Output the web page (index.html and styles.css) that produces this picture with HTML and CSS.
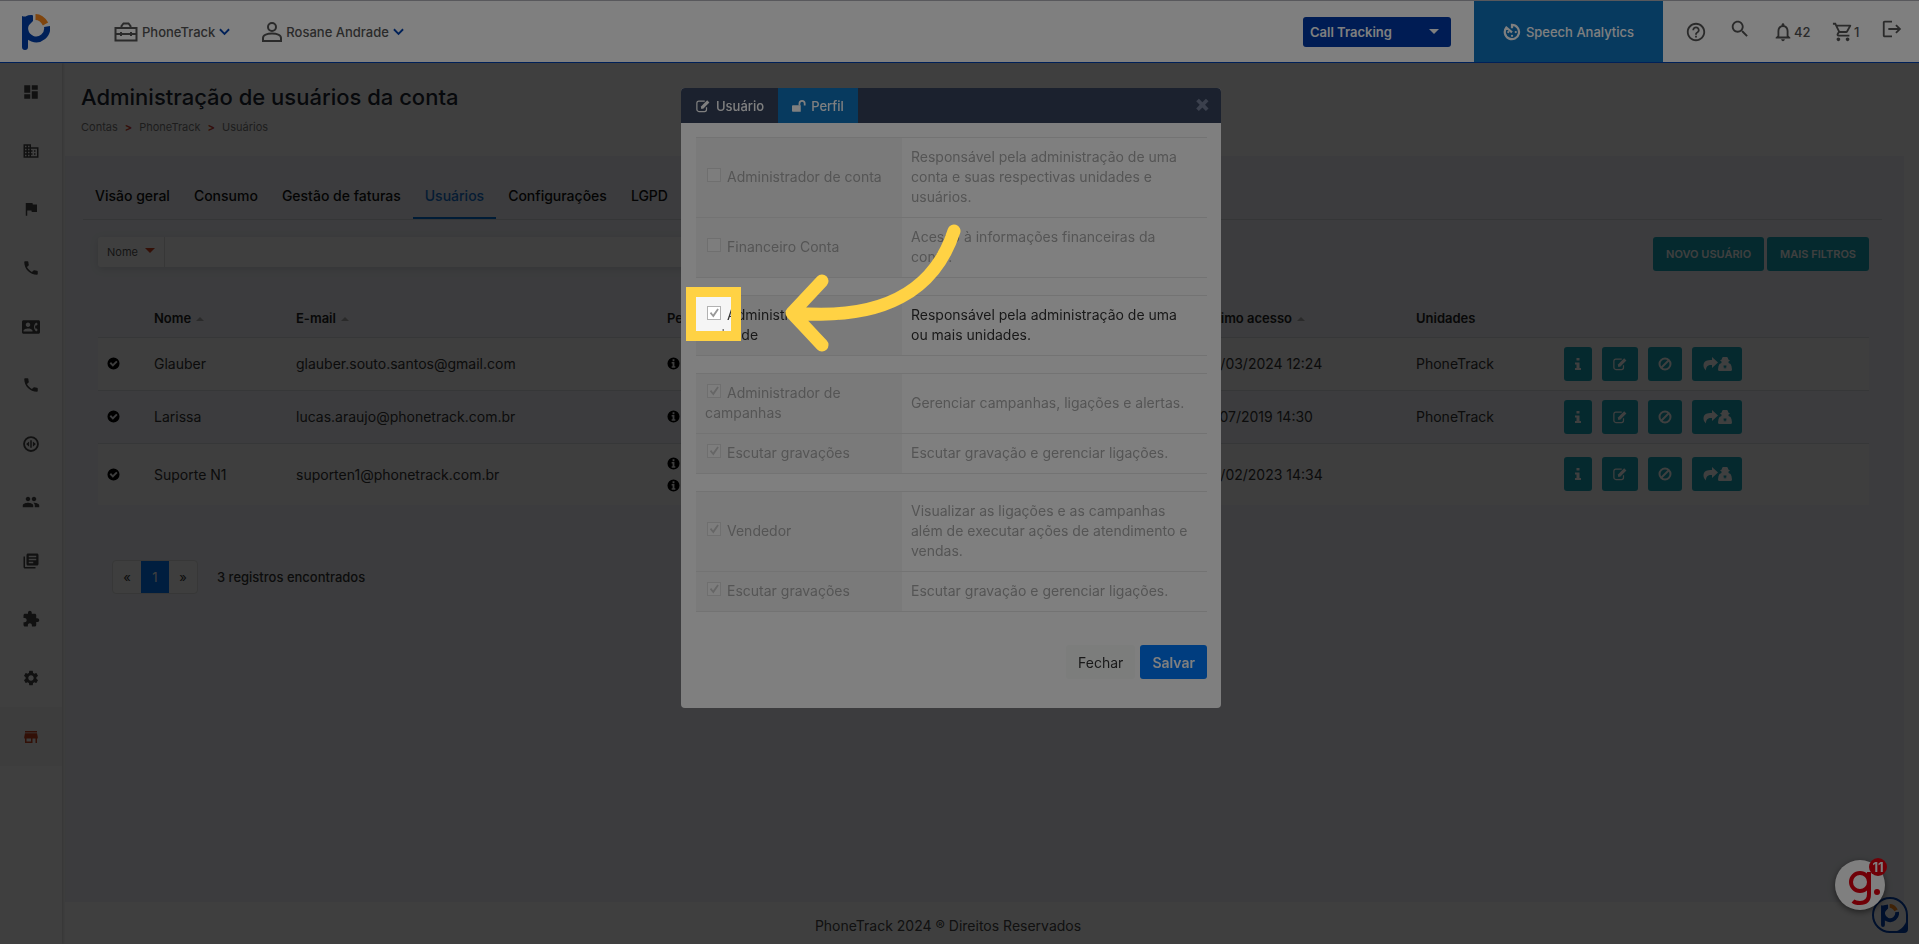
FILE: index.html
```html
<!DOCTYPE html>
<html lang="pt-BR">
<head>
    <meta charset="UTF-8">
    <meta name="viewport" content="width=device-width, initial-scale=1.0">
    <title>PhoneTrack</title>
    <link rel="stylesheet" href="styles.css">
</head>
<body>

    <svg class="sprite" aria-hidden="true">
        <symbol id="i-dashboard" viewBox="0 0 24 24"><path d="M3 13h8V3H3v10zm0 8h8v-6H3v6zm10 0h8V11h-8v10zm0-18v6h8V3h-8z"/></symbol>
        <symbol id="i-business" viewBox="0 0 24 24"><path d="M12 7V3H2v18h20V7H12zM6 19H4v-2h2v2zm0-4H4v-2h2v2zm0-4H4V9h2v2zm0-4H4V5h2v2zm4 12H8v-2h2v2zm0-4H8v-2h2v2zm0-4H8V9h2v2zm0-4H8V5h2v2zm10 12h-8v-2h2v-2h-2v-2h2v-2h-2V9h8v10zm-2-8h-2v2h2v-2zm0 4h-2v2h2v-2z"/></symbol>
        <symbol id="i-flag" viewBox="0 0 24 24"><path d="M14.4 6L14 4H5v17h2v-7h5.6l.4 2h7V6z"/></symbol>
        <symbol id="i-phone" viewBox="0 0 24 24"><path d="M6.62 10.79c1.44 2.83 3.76 5.14 6.59 6.59l2.2-2.2c.27-.27.67-.36 1.02-.24 1.12.37 2.33.57 3.57.57.55 0 1 .45 1 1V20c0 .55-.45 1-1 1-9.39 0-17-7.61-17-17 0-.55.45-1 1-1h3.5c.55 0 1 .45 1 1 0 1.25.2 2.45.57 3.57.11.35.03.74-.25 1.02l-2.2 2.2z"/></symbol>
        <symbol id="i-contact" viewBox="0 0 24 24"><path d="M22 3H2C.9 3 0 3.9 0 5v14c0 1.1.9 2 2 2h20c1.1 0 1.99-.9 1.99-2L24 5c0-1.1-.9-2-2-2zM8 6c1.66 0 3 1.34 3 3s-1.34 3-3 3-3-1.34-3-3 1.34-3 3-3zm6 12H2v-1c0-2 4-3.1 6-3.1s6 1.1 6 3.1v1zm3.85-4h1.64L21 16l-1.99 1.99c-1.31-.98-2.28-2.38-2.73-3.99-.18-.64-.28-1.31-.28-2s.1-1.36.28-2c.45-1.62 1.42-3.01 2.73-3.99L21 8l-1.51 2h-1.64c-.22.63-.35 1.3-.35 2s.13 1.37.35 2z"/></symbol>
        <symbol id="i-code" viewBox="0 0 24 24"><path d="M12 1.500a10.500 10.500 0 100 21 10.500 10.500 0 000-21zm0 2.500a8 8 0 110 16 8 8 0 010-16zM11 7h2v10h-2zM9.500 8.500v7L5.500 12zM14.500 8.500v7l4-3.500z"/></symbol>
        <symbol id="i-group" viewBox="0 0 24 24"><path d="M16 11c1.66 0 2.99-1.34 2.99-3S17.66 5 16 5c-1.66 0-3 1.34-3 3s1.34 3 3 3zm-8 0c1.66 0 2.99-1.34 2.99-3S9.66 5 8 5C6.34 5 5 6.34 5 8s1.34 3 3 3zm0 2c-2.33 0-7 1.17-7 3.5V19h14v-2.5c0-2.33-4.67-3.5-7-3.5zm8 0c-.29 0-.62.02-.97.05 1.16.84 1.97 1.97 1.97 3.45V19h6v-2.500c0-2.330-4.670-3.500-7-3.500z"/></symbol>
        <symbol id="i-books" viewBox="0 0 24 24"><path d="M4 6H2v14c0 1.1.9 2 2 2h14v-2H4V6zm16-4H8c-1.100 0-2 .9-2 2v12c0 1.100.9 2 2 2h12c1.100 0 2-.9 2-2V4c0-1.100-.9-2-2-2zm-1 9H9V9h10v2zm-4 4H9v-2h6v2zm4-8H9V5h10v2z"/></symbol>
        <symbol id="i-extension" viewBox="0 0 24 24"><path d="M20.5 11H19V7c0-1.100-.9-2-2-2h-4V3.500C13 2.120 11.880 1 10.500 1S8 2.120 8 3.500V5H4c-1.100 0-1.990.9-1.990 2v3.800H3.500c1.490 0 2.700 1.210 2.700 2.700s-1.210 2.700-2.700 2.700H2V20c0 1.100.9 2 2 2h3.800v-1.500c0-1.490 1.210-2.700 2.700-2.700 1.490 0 2.700 1.210 2.700 2.700V22H17c1.100 0 2-.9 2-2v-4h1.500c1.380 0 2.500-1.120 2.500-2.500S21.880 11 20.500 11z"/></symbol>
        <symbol id="i-settings" viewBox="0 0 24 24"><path d="M19.14 12.94c.04-.3.06-.61.06-.94 0-.32-.02-.64-.07-.94l2.03-1.58c.18-.14.23-.41.12-.61l-1.92-3.32c-.12-.22-.37-.29-.59-.22l-2.39.96c-.5-.38-1.03-.7-1.62-.94l-.36-2.54c-.04-.24-.24-.41-.48-.41h-3.84c-.24 0-.43.17-.47.41l-.36 2.54c-.59.24-1.13.57-1.62.94l-2.39-.96c-.22-.08-.47 0-.59.22L2.74 8.87c-.12.21-.08.47.12.61l2.03 1.58c-.05.3-.09.63-.09.94s.02.64.07.94l-2.03 1.58c-.18.14-.23.41-.12.61l1.92 3.32c.12.22.37.29.59.22l2.39-.96c.5.38 1.03.7 1.62.94l.36 2.54c.05.24.24.41.48.41h3.84c.24 0 .44-.17.47-.41l.36-2.54c.59-.24 1.13-.56 1.62-.94l2.39.96c.22.08.47 0 .59-.22l1.92-3.32c.12-.22.07-.47-.12-.61l-2.01-1.58zM12 15.6c-1.98 0-3.6-1.62-3.6-3.6s1.62-3.6 3.6-3.6 3.6 1.62 3.6 3.6-1.62 3.6-3.6 3.6z"/></symbol>
        <symbol id="i-store" viewBox="0 0 24 24"><path d="M20 4H4v2h16V4zm1 10v-2l-1-5H4l-1 5v2h1v6h10v-6h4v6h2v-6h1zm-9 4H6v-4h6v4z"/></symbol>
        <symbol id="i-help" viewBox="0 0 24 24"><path d="M11 18h2v-2h-2v2zm1-16C6.48 2 2 6.48 2 12s4.48 10 10 10 10-4.48 10-10S17.52 2 12 2zm0 18c-4.41 0-8-3.59-8-8s3.59-8 8-8 8 3.59 8 8-3.59 8-8 8zm0-14c-2.21 0-4 1.79-4 4h2c0-1.1.9-2 2-2s2 .9 2 2c0 2-3 1.750-3 5h2c0-2.250 3-2.500 3-5 0-2.210-1.790-4-4-4z"/></symbol>
        <symbol id="i-search" viewBox="0 0 24 24"><path d="M15.500 14h-.79l-.28-.27C15.410 12.590 16 11.110 16 9.500 16 5.910 13.090 3 9.500 3S3 5.910 3 9.500 5.910 16 9.500 16c1.610 0 3.090-.59 4.230-1.570l.27.28v.79l5 4.990L20.490 19l-4.990-5zm-6 0C7.010 14 5 11.990 5 9.500S7.010 5 9.500 5 14 7.010 14 9.500 11.990 14 9.500 14z"/></symbol>
        <symbol id="i-bell" viewBox="0 0 24 24"><path d="M12 22c1.100 0 2-.9 2-2h-4c0 1.100.9 2 2 2zm6-6v-5c0-3.070-1.630-5.640-4.500-6.320V4c0-.83-.67-1.500-1.500-1.500s-1.500.67-1.500 1.500v.68C7.640 5.360 6 7.920 6 11v5l-2 2v1h16v-1l-2-2zm-2 1H8v-6c0-2.480 1.510-4.500 4-4.500s4 2.020 4 4.500v6z"/></symbol>
        <symbol id="i-cart" viewBox="0 0 24 24"><path d="M15.550 13c.75 0 1.410-.41 1.750-1.030l3.580-6.490c.37-.66-.11-1.480-.87-1.480H5.210l-.94-2H1v2h2l3.600 7.590-1.350 2.440C4.520 15.370 5.480 17 7 17h12v-2H7l1.100-2h7.450zM6.160 6h12.150l-2.760 5H8.530L6.160 6zM7 18c-1.100 0-1.990.9-1.990 2S5.900 22 7 22s2-.9 2-2-.9-2-2-2zm10 0c-1.100 0-1.990.9-1.990 2s.89 2 1.990 2 2-.9 2-2-.9-2-2-2z"/></symbol>
        <symbol id="i-logout" viewBox="0 0 24 24"><path d="M17 7l-1.410 1.410L18.170 11H8v2h10.170l-2.580 2.580L17 17l5-5zM4 5h8V3H4c-1.100 0-2 .9-2 2v14c0 1.100.9 2 2 2h8v-2H4V5z"/></symbol>
        <symbol id="i-person" viewBox="0 0 20 20"><g fill="none" stroke="currentColor" stroke-width="2"><circle cx="10" cy="5" r="4"/><path d="M1 19v-3c0-6 18-6 18 0v3z"/></g></symbol>
        <symbol id="i-toolbox" viewBox="0 0 24 20"><g fill="none" stroke="currentColor" stroke-width="2"><path d="M1.500 6h21v12.500h-21zM7.500 6V4l2-2.500h5l2 2.500v2M2 12h20M7 10v4M17 10v4"/></g></symbol>
        <symbol id="i-chevron" viewBox="0 0 12 8"><path d="M1 1l5 5 5-5" fill="none" stroke="currentColor" stroke-width="2"/></symbol>
        <symbol id="i-timer" viewBox="0 0 24 24"><path d="M12 7V2.500a9.500 9.500 0 11-7.500 3.500l7.500 6.500" fill="none" stroke="currentColor" stroke-width="3"/><circle cx="17" cy="12" r="1.500"/><circle cx="12" cy="17" r="1.500"/><circle cx="7" cy="12" r="1.500"/></symbol>
        <symbol id="i-edit" viewBox="0 0 16 16"><path d="M12 9.500V12a2.300 2.300 0 01-2.300 2.300H3.300A2.300 2.300 0 011 12V4.800a2.300 2.300 0 012.300-2.300H10" fill="none" stroke="currentColor" stroke-width="1.400"/><path d="M12.800 1.500l2.500 2.500-7.100 7.100H5.700V8.600z"/></symbol>
        <symbol id="i-unlock" viewBox="0 0 16 14"><path d="M1 6h9v7.500H1q-1 0-1-1V7q0-1 1-1z"/><path d="M8.500 6.500V4a3 3 0 016 0v2.500" fill="none" stroke="currentColor" stroke-width="2"/></symbol>
        <symbol id="i-check" viewBox="0 0 14 14"><path fill-rule="evenodd" d="M7 .5a6.500 6.500 0 100 13 6.500 6.500 0 000-13zM2.800 7l1.500-1.500 2 2L9.900 4l1.500 1.500-5.100 5z"/></symbol>
        <symbol id="i-info" viewBox="0 0 14 14"><path fill-rule="evenodd" d="M7 .5a6.500 6.500 0 100 13 6.500 6.500 0 000-13zM6 2.500h2v2H6zM5 5.500h3v4.500h1v1.500H5V10h1V7H5z"/></symbol>
        <symbol id="i-letter" viewBox="0 0 8 14"><path d="M2.500 1h3v2.500h-3zM1 5.500h4.500V11H7v2H1v-2h1.500V7.500H1z"/></symbol>
        <symbol id="i-ban" viewBox="0 0 14 14"><g fill="none" stroke="currentColor" stroke-width="2"><circle cx="7" cy="7" r="5.500"/><path d="M11 3l-8 8"/></g></symbol>
        <symbol id="i-share" viewBox="0 0 16 14"><path d="M10 0l6 5.500L10 11V8C6 7.800 4 9 4 13.500 2.500 12 1.500 10.500 1.500 8.500 1.500 4 5 3 10 3z"/></symbol>
        <symbol id="i-secret" viewBox="0 0 14 14"><path fill-rule="evenodd" d="M5 0h4q1 0 1.300 2.500L12 3.500l-1.500 1v1.500L12.500 7q1.500 2 1.500 5.500 0 1.500-1.500 1.500h-11Q0 14 0 12.500 0 9 1.500 7l2-1V4.500L2 3.500l1.700-1Q4 0 5 0zM5.500 8.500l.5 3.500 1-2 1 2 .5-3.500z"/></symbol>
        <symbol id="i-logo" viewBox="0 0 28 36">
            <path d="M0 2q3 1 4.500 0T9 1q2-.5 2 1v5L6 12v21a3 3 0 01-6 0z" fill="#0041b0"/>
            <path d="M25 12.500A11 11 0 117 6" fill="none" stroke="#0041b0" stroke-width="6"/>
            <path d="M13.500 3q6 0 10 7" fill="none" stroke="#ff8a1c" stroke-width="6"/>
        </symbol>
    </svg>

    <header class="topbar">
        <a class="logo" href="#" aria-label="PhoneTrack"><svg><use href="#i-logo"/></svg></a>
        <a class="top-menu" href="#"><svg class="icon-toolbox"><use href="#i-toolbox"/></svg>PhoneTrack<svg class="chevron"><use href="#i-chevron"/></svg></a>
        <a class="top-menu" href="#"><svg class="icon-person"><use href="#i-person"/></svg>Rosane Andrade<svg class="chevron"><use href="#i-chevron"/></svg></a>
        <button type="button" class="product">Call Tracking<span class="caret"></span></button>
        <a class="speech" href="#"><svg><use href="#i-timer"/></svg>Speech Analytics</a>
        <nav class="top-icons">
            <a href="#" aria-label="Ajuda"><svg><use href="#i-help"/></svg></a>
            <a class="raised" href="#" aria-label="Buscar"><svg><use href="#i-search"/></svg></a>
            <a href="#"><svg><use href="#i-bell"/></svg>42</a>
            <a href="#"><svg><use href="#i-cart"/></svg>1</a>
            <a class="raised" href="#" aria-label="Sair"><svg><use href="#i-logout"/></svg></a>
        </nav>
    </header>

    <div class="layout">
        <nav class="sidebar">
            <a href="#" aria-label="Dashboard"><svg><use href="#i-dashboard"/></svg></a>
            <a href="#" aria-label="Contas"><svg><use href="#i-business"/></svg></a>
            <a href="#" aria-label="Campanhas"><svg><use href="#i-flag"/></svg></a>
            <a href="#" aria-label="Números"><svg><use href="#i-phone"/></svg></a>
            <a href="#" aria-label="Contatos"><svg><use href="#i-contact"/></svg></a>
            <a href="#" aria-label="Ligações"><svg><use href="#i-phone"/></svg></a>
            <a href="#" aria-label="Scripts"><svg><use href="#i-code"/></svg></a>
            <a href="#" aria-label="Usuários"><svg><use href="#i-group"/></svg></a>
            <a href="#" aria-label="Relatórios"><svg><use href="#i-books"/></svg></a>
            <a href="#" aria-label="Integrações"><svg><use href="#i-extension"/></svg></a>
            <a href="#" aria-label="Configurações"><svg><use href="#i-settings"/></svg></a>
            <a class="active" href="#" aria-label="Loja"><svg><use href="#i-store"/></svg></a>
        </nav>

        <main class="page">
            <div class="page-title">
                <h1>Administração de usuários da conta</h1>
                <div class="breadcrumb"><a href="#">Contas</a><b>&gt;</b><a href="#">PhoneTrack</a><b>&gt;</b><a href="#">Usuários</a></div>
            </div>

            <div class="content">
                <nav class="tabs">
                    <a href="#">Visão geral</a>
                    <a href="#">Consumo</a>
                    <a href="#">Gestão de faturas</a>
                    <a class="active" href="#">Usuários</a>
                    <a href="#">Configurações</a>
                    <a href="#">LGPD</a>
                </nav>

                <div class="filters">
                    <div class="search">
                        <button type="button" class="search-field">Nome<span class="caret"></span></button>
                        <input type="text" aria-label="Buscar por nome">
                    </div>
                    <div class="filter-buttons">
                        <button type="button" class="btn-info">NOVO USUÁRIO</button>
                        <button type="button" class="btn-info">MAIS FILTROS</button>
                    </div>
                </div>

                <table class="users">
                    <thead>
                        <tr>
                            <th class="col-status"></th>
                            <th class="col-name">Nome<span class="sort"></span></th>
                            <th class="col-mail">E-mail<span class="sort"></span></th>
                            <th class="col-profile">Perfil</th>
                            <th class="col-access">Último acesso<span class="sort"></span></th>
                            <th class="col-unit">Unidades</th>
                            <th></th>
                        </tr>
                    </thead>
                    <tbody>
                        <tr>
                            <td><svg class="dot"><use href="#i-check"/></svg></td>
                            <td>Glauber</td>
                            <td>glauber.souto.santos@gmail.com</td>
                            <td class="profiles"><svg class="dot"><use href="#i-info"/></svg></td>
                            <td>05/03/2024 12:24</td>
                            <td>PhoneTrack</td>
                            <td>
                                <div class="actions">
                                    <button type="button" class="btn-info" aria-label="Detalhes"><svg class="w8"><use href="#i-letter"/></svg></button>
                                    <button type="button" class="btn-info" aria-label="Editar"><svg class="w16"><use href="#i-edit"/></svg></button>
                                    <button type="button" class="btn-info" aria-label="Desativar"><svg class="w14"><use href="#i-ban"/></svg></button>
                                    <button type="button" class="btn-info" aria-label="Acessar como"><svg class="w16"><use href="#i-share"/></svg><svg class="w14"><use href="#i-secret"/></svg></button>
                                </div>
                            </td>
                        </tr>
                        <tr>
                            <td><svg class="dot"><use href="#i-check"/></svg></td>
                            <td>Larissa</td>
                            <td>lucas.araujo@phonetrack.com.br</td>
                            <td class="profiles"><svg class="dot"><use href="#i-info"/></svg></td>
                            <td>11/07/2019 14:30</td>
                            <td>PhoneTrack</td>
                            <td>
                                <div class="actions">
                                    <button type="button" class="btn-info" aria-label="Detalhes"><svg class="w8"><use href="#i-letter"/></svg></button>
                                    <button type="button" class="btn-info" aria-label="Editar"><svg class="w16"><use href="#i-edit"/></svg></button>
                                    <button type="button" class="btn-info" aria-label="Desativar"><svg class="w14"><use href="#i-ban"/></svg></button>
                                    <button type="button" class="btn-info" aria-label="Acessar como"><svg class="w16"><use href="#i-share"/></svg><svg class="w14"><use href="#i-secret"/></svg></button>
                                </div>
                            </td>
                        </tr>
                        <tr class="tall">
                            <td><svg class="dot"><use href="#i-check"/></svg></td>
                            <td>Suporte N1</td>
                            <td>suporten1@phonetrack.com.br</td>
                            <td class="profiles"><svg class="dot"><use href="#i-info"/></svg><svg class="dot"><use href="#i-info"/></svg></td>
                            <td>02/02/2023 14:34</td>
                            <td></td>
                            <td>
                                <div class="actions">
                                    <button type="button" class="btn-info" aria-label="Detalhes"><svg class="w8"><use href="#i-letter"/></svg></button>
                                    <button type="button" class="btn-info" aria-label="Editar"><svg class="w16"><use href="#i-edit"/></svg></button>
                                    <button type="button" class="btn-info" aria-label="Desativar"><svg class="w14"><use href="#i-ban"/></svg></button>
                                    <button type="button" class="btn-info" aria-label="Acessar como"><svg class="w16"><use href="#i-share"/></svg><svg class="w14"><use href="#i-secret"/></svg></button>
                                </div>
                            </td>
                        </tr>
                    </tbody>
                </table>

                <div class="paging">
                    <div class="pages"><a href="#">«</a><a class="active" href="#">1</a><a href="#">»</a></div>
                    <span>3 registros encontrados</span>
                </div>
            </div>

            <footer>PhoneTrack 2024 ® Direitos Reservados</footer>
        </main>
    </div>

    <a class="assistant" href="#" aria-label="PhoneTrack"><svg><use href="#i-logo"/></svg></a>

    <div class="backdrop"></div>

    <button type="button" class="guide" aria-label="Guia">
        <svg viewBox="0 0 34 36"><g fill="none" stroke="#e1000f" stroke-width="4"><circle cx="13" cy="13" r="9"/><path d="M22 3v22q0 9-9 9-5 0-7-2"/></g><circle cx="30" cy="23" r="3" fill="#e1000f"/></svg>
        <span>11</span>
    </button>

    <div class="modal" role="dialog">
        <div class="modal-header">
            <a href="#"><svg class="w16"><use href="#i-edit"/></svg>Usuário</a>
            <a class="active" href="#"><svg class="w14"><use href="#i-unlock"/></svg>Perfil</a>
            <button type="button" class="close" aria-label="Fechar">×</button>
        </div>
        <div class="modal-body">
            <table class="roles">
                <tr>
                    <td><input type="checkbox" id="conta" disabled><label for="conta">Administrador de conta</label></td>
                    <td>Responsável pela administração de uma conta e suas respectivas unidades e usuários.</td>
                </tr>
                <tr>
                    <td><input type="checkbox" id="financeiro" disabled><label for="financeiro">Financeiro Conta</label></td>
                    <td>Acesso à informações financeiras da conta.</td>
                </tr>
            </table>
            <table class="roles enabled">
                <tr>
                    <td><span class="target"><input type="checkbox" id="unidade" checked><span class="spotlight"></span><svg class="arrow" viewBox="0 0 180 80"><path d="M169 8C150 67 99 98 9 90M37 58L7 90 37 122"/></svg></span><label for="unidade">Administrador de unidade</label></td>
                    <td>Responsável pela administração de uma ou mais unidades.</td>
                </tr>
            </table>
            <table class="roles">
                <tr>
                    <td><input type="checkbox" id="campanhas" checked disabled><label for="campanhas">Administrador de campanhas</label></td>
                    <td>Gerenciar campanhas, ligações e alertas.</td>
                </tr>
                <tr>
                    <td><input type="checkbox" id="escutar1" checked disabled><label for="escutar1">Escutar gravações</label></td>
                    <td>Escutar gravação e gerenciar ligações.</td>
                </tr>
            </table>
            <table class="roles">
                <tr>
                    <td><input type="checkbox" id="vendedor" checked disabled><label for="vendedor">Vendedor</label></td>
                    <td>Visualizar as ligações e as campanhas além de executar ações de atendimento e vendas.</td>
                </tr>
                <tr>
                    <td><input type="checkbox" id="escutar2" checked disabled><label for="escutar2">Escutar gravações</label></td>
                    <td>Escutar gravação e gerenciar ligações.</td>
                </tr>
            </table>
            <div class="modal-footer">
                <button type="button" class="btn-light">Fechar</button>
                <button type="button" class="btn-primary">Salvar</button>
            </div>
        </div>
    </div>

</body>
</html>
```

FILE: styles.css
```css
* {
    box-sizing: border-box;
}

body {
    margin: 0;
    min-height: 100vh;
    display: flex;
    flex-direction: column;
    overflow: hidden;
    font-family: Inter, "Noto Sans", sans-serif;
    font-size: 13px;
    color: #333;
    background-color: white;
}

a {
    color: inherit;
    text-decoration: none;
}

button, input {
    font-family: inherit;
    font-size: inherit;
}

button {
    border: none;
    cursor: pointer;
}

svg {
    fill: currentColor;
    flex: none;
}

.sprite {
    display: none;
}

.w8 { width: 8px; height: 14px; }
.w14 { width: 14px; height: 14px; }
.w16 { width: 16px; height: 14px; }

/* Topo */
.topbar {
    position: relative;
    z-index: 20;
    display: flex;
    align-items: center;
    height: 63px;
    padding-right: 16px;
    background-color: white;
    border-top: 1px solid #b0b0b8;
    border-bottom: 1px solid #0041b0;
    font-weight: 500;
    color: #555;
}

.logo {
    margin: 0 64px 0 22px;
}

.logo svg {
    display: block;
    width: 28px;
    height: 36px;
}

.top-menu {
    display: flex;
    align-items: center;
    gap: 4px;
    margin-right: 32px;
}

.icon-toolbox {
    width: 24px;
    height: 20px;
}

.icon-person {
    width: 20px;
    height: 20px;
}

.chevron {
    width: 11px;
    height: 8px;
    color: #0041b0;
}

.product {
    display: flex;
    align-items: center;
    justify-content: space-between;
    width: 148px;
    height: 30px;
    margin-left: auto;
    margin-right: 23px;
    padding: 0 12px 0 7px;
    border-radius: 3px;
    background-color: #0038a8;
    color: white;
    font-weight: 600;
}

.caret {
    border: 5px solid transparent;
    border-top-color: currentColor;
    border-bottom: none;
}

.speech {
    display: flex;
    align-items: center;
    justify-content: center;
    gap: 5px;
    align-self: stretch;
    width: 189px;
    background-color: #0e74be;
    color: white;
}

.speech svg {
    width: 18px;
    height: 18px;
}

.top-icons {
    display: flex;
    align-items: center;
    justify-content: space-between;
    width: 218px;
    margin-left: 22px;
}

.top-icons a {
    display: flex;
    align-items: center;
}

.top-icons svg {
    width: 22px;
    height: 22px;
}

.top-icons .raised {
    padding-bottom: 5px;
}

/* Menu lateral */
.layout {
    flex: 1;
    display: flex;
}

.sidebar {
    position: relative;
    z-index: 1;
    display: flex;
    flex-direction: column;
    width: 62px;
    padding-bottom: 178px;
    background-color: white;
    box-shadow: 1px 0 3px rgba(0, 0, 0, 0.2);
    color: #444;
}

.sidebar a {
    flex: 1;
    display: flex;
    align-items: center;
    justify-content: center;
}

.sidebar svg {
    width: 18px;
    height: 18px;
}

.sidebar .active {
    background-color: #f5f5f5;
    color: #c8401c;
}

/* Página */
.page {
    flex: 1;
    display: flex;
    flex-direction: column;
}

.page-title {
    padding: 19px 19px 0;
    height: 93px;
}

h1 {
    margin: 0;
    font-size: 22px;
    line-height: 30px;
    font-weight: 500;
    color: #1c2733;
}

.breadcrumb {
    display: flex;
    gap: 7px;
    margin-top: 8px;
    font-size: 11px;
    line-height: 14px;
    color: #777;
}

.breadcrumb b {
    color: #d0402c;
}

.content {
    flex: 1;
    margin: 0 15px 0 3px;
    padding: 20px 35px 0 33px;
    background-color: #f0f3f8;
}

.tabs {
    display: flex;
    margin: 0 -13px 0 -15px;
    border-bottom: 1px solid #d5d8dd;
    font-size: 14px;
    font-weight: 500;
    color: #111;
}

.tabs a {
    padding: 10px 12px 11px;
    line-height: 20px;
    border-bottom: 2px solid transparent;
}

.tabs .active {
    color: #1470d0;
    border-bottom-color: #0070d8;
}

.filters {
    display: flex;
    justify-content: space-between;
    align-items: flex-start;
    margin-top: 17px;
    gap: 450px;
}

.search {
    flex: 1;
    display: flex;
    height: 30px;
    background-color: white;
    border-radius: 3px;
    box-shadow: 0 2px 8px rgba(0, 0, 0, 0.12);
}

.search-field {
    width: 67px;
    padding: 0 9px;
    display: flex;
    align-items: center;
    justify-content: space-between;
    background: none;
    border-right: 1px solid #ddd;
    font-size: 11px;
    color: #555;
}

.search-field .caret {
    color: #d0401c;
    margin-bottom: 4px;
}

.search input {
    flex: 1;
    border: none;
    background: none;
}

.filter-buttons {
    display: flex;
    gap: 3px;
}

.btn-info {
    height: 34px;
    padding: 0 13px;
    border-radius: 3px;
    background-color: #14a5b9;
    color: white;
    font-size: 11px;
    font-weight: 600;
}

.users {
    width: 100%;
    margin-top: 28px;
    border-collapse: collapse;
    table-layout: fixed;
    font-size: 14px;
    color: #333;
}

.users th {
    height: 38px;
    padding: 0;
    text-align: left;
    font-size: 13px;
    font-weight: 600;
    color: #222;
}

.users td {
    height: 53px;
    padding: 0;
    border-top: 1px solid #d8dce2;
}

.users .tall td {
    height: 62px;
}

.users tbody tr:nth-child(odd) {
    background-color: #f8f8f8;
}

.users td:first-child {
    padding-left: 9px;
}

.col-status { width: 56px; }
.col-name { width: 142px; }
.col-mail { width: 371px; }
.col-profile { width: 536px; }
.col-access { width: 213px; }
.col-unit { width: 148px; }

.sort {
    display: inline-block;
    margin: 0 0 2px 5px;
    border: 4px solid transparent;
    border-top: none;
    border-bottom-color: #aaa;
}

.dot {
    display: block;
    width: 13px;
    height: 13px;
    color: black;
}

.profiles .dot + .dot {
    margin-top: 9px;
}

.actions {
    display: flex;
    gap: 10px;
}

.actions .btn-info {
    display: flex;
    align-items: center;
    padding: 0 10px;
}

.paging {
    display: flex;
    align-items: center;
    gap: 19px;
    margin: 55px 0 0 14px;
    font-weight: 500;
}

.pages {
    display: flex;
    border: 1px solid #ddd;
    border-radius: 4px;
    background-color: #fafafa;
}

.pages a {
    width: 28px;
    line-height: 32px;
    text-align: center;
    font-weight: 400;
}

.pages .active {
    background-color: #007bff;
    color: white;
}

footer {
    height: 42px;
    padding: 16px 85px 0 0;
    text-align: center;
    font-size: 14px;
    line-height: 16px;
    color: #444;
}

/* Botões flutuantes */
.assistant {
    position: fixed;
    right: 11px;
    bottom: 11px;
    width: 36px;
    height: 36px;
    display: flex;
    align-items: center;
    justify-content: center;
    border: 2px solid #0041b0;
    border-radius: 50% 50% 4px 50%;
    background: radial-gradient(circle, white 17px, #0041b0 18px);
}

.assistant svg {
    width: 18px;
    height: 23px;
}

.guide {
    position: fixed;
    z-index: 20;
    right: 34px;
    bottom: 34px;
    width: 50px;
    height: 50px;
    padding: 0;
    border-radius: 50%;
    background-color: white;
    box-shadow: 0 2px 6px rgba(0, 0, 0, 0.5);
}

.guide svg {
    width: 34px;
    height: 36px;
    margin: 7px 0 0 7px;
}

.guide span {
    position: absolute;
    top: -2px;
    right: -2px;
    width: 18px;
    border-radius: 9px;
    line-height: 18px;
    background-color: #e1000f;
    color: white;
    font-size: 13px;
    font-weight: 700;
}

/* Modal */
.backdrop {
    position: fixed;
    inset: 0;
    z-index: 10;
    background-color: rgba(0, 0, 0, 0.5);
}

.modal {
    position: fixed;
    z-index: 30;
    top: 88px;
    left: 681px;
    width: 540px;
    border-radius: 4px;
    background-color: white;
}

.modal-header {
    display: flex;
    height: 35px;
    border-radius: 4px 4px 0 0;
    background-color: #36425c;
    color: white;
    font-weight: 500;
}

.modal-header a {
    display: flex;
    align-items: center;
    gap: 5px;
    padding: 0 14px;
}

.modal-header .active {
    background-color: #0e74be;
}

.close {
    margin-left: auto;
    padding: 0 11px 5px;
    background: none;
    color: #76809a;
    font-size: 22px;
    font-weight: 900;
}

.modal-body {
    padding: 14px 14px 29px 15px;
}

.roles {
    width: 100%;
    margin-bottom: 17px;
    border-collapse: separate;
    border-spacing: 0;
    border-bottom: 1px solid #e6e6e6;
    font-size: 14px;
    line-height: 20px;
    color: #aaa;
}

.roles td {
    padding: 9px 14px 10px 9px;
    border-top: 1px solid #e6e6e6;
}

.roles td:first-child {
    width: 206px;
    background-color: #f5f5f5;
}

.roles.enabled {
    color: #333;
}

.roles input {
    appearance: none;
    width: 14px;
    height: 14px;
    margin: 0 6px 0 2px;
    border: 1px solid #dedede;
    background-color: #fbfbfb;
}

.roles input:checked::before {
    content: "";
    display: block;
    height: 12px;
    background-color: #ccc;
    clip-path: polygon(15% 52%, 27% 42%, 42% 62%, 78% 12%, 90% 20%, 45% 88%);
}

.roles.enabled input {
    border-color: #b2b2b2;
    background-color: white;
}

.roles.enabled input::before {
    background-color: #999;
}

/* Destaque do passo atual */
.target {
    position: relative;
}

.spotlight {
    position: absolute;
    z-index: 1;
    top: -19px;
    left: -19px;
    width: 55px;
    height: 54px;
    border: 10px solid #ffd244;
    box-shadow: 0 0 0 3000px rgba(0, 0, 0, 0.5);
    pointer-events: none;
}

.arrow {
    position: absolute;
    z-index: 2;
    top: -83px;
    left: 80px;
    width: 180px;
    height: 80px;
    overflow: visible;
    fill: none;
    stroke: #ffd244;
    stroke-width: 13px;
    stroke-linecap: round;
    stroke-linejoin: round;
    pointer-events: none;
}

.modal-footer {
    display: flex;
    justify-content: flex-end;
    gap: 5px;
    margin-top: 33px;
}

.modal-footer button {
    height: 34px;
    padding: 0 12px;
    border-radius: 3px;
    font-size: 14px;
}

.btn-light {
    background-color: #f8faf9;
    color: #333;
}

.btn-primary {
    background-color: #007bff;
    color: white;
    font-weight: 600;
}
```
